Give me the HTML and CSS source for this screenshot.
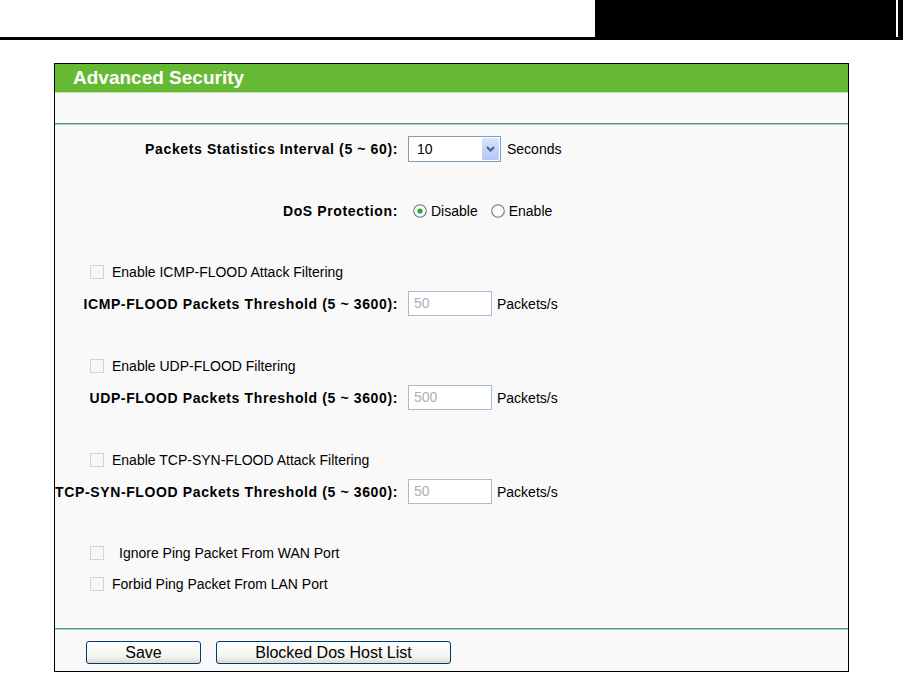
FILE: index.html
```html
<!DOCTYPE html>
<html>
<head>
<meta charset="utf-8">
<link rel="stylesheet" href="styles.css">
</head>
<body>
<div class="topbar">
  <div class="topbar-space"></div>
  <div class="topbar-block"></div>
  <div class="topbar-gap"></div>
  <div class="topbar-end"></div>
</div>
<div class="panel">
  <div class="panel-head">Advanced Security</div>
  <div class="panel-sub"></div>
  <div class="rule"></div>
  <div class="form">
    <div class="row row-interval">
      <div class="label">Packets Statistics Interval (5 ~ 60):</div>
      <div class="field">
        <div class="select"><span class="select-val">10</span><span class="select-btn"><svg width="9" height="6" viewBox="0 0 9 6"><polyline points="1,1 4.5,4.5 8,1" fill="none" stroke="#4d6185" stroke-width="2"/></svg></span></div>
        <span class="unit">Seconds</span>
      </div>
    </div>
    <div class="row row-dos">
      <div class="label">DoS Protection:</div>
      <div class="field radios">
        <span class="radio"><svg width="14" height="14" viewBox="0 0 14 14"><circle cx="7" cy="7" r="6.3" fill="#fbfbfb" stroke="#5d7a9c" stroke-width="1.1"/><circle cx="7" cy="7" r="2.6" fill="#2fa83a"/></svg></span><span class="rtext">Disable</span>
        <span class="radio"><svg width="14" height="14" viewBox="0 0 14 14"><circle cx="7" cy="7" r="6.3" fill="#fbfbfb" stroke="#5d7a9c" stroke-width="1.1"/></svg></span><span class="rtext">Enable</span>
      </div>
    </div>
    <div class="check check-first"><span class="box"></span><span class="ctext">Enable ICMP-FLOOD Attack Filtering</span></div>
    <div class="row row-thr">
      <div class="label">ICMP-FLOOD Packets Threshold (5 ~ 3600):</div>
      <div class="field"><div class="input">50</div><span class="unit2">Packets/s</span></div>
    </div>
    <div class="check check-next"><span class="box"></span><span class="ctext">Enable UDP-FLOOD Filtering</span></div>
    <div class="row row-thr">
      <div class="label">UDP-FLOOD Packets Threshold (5 ~ 3600):</div>
      <div class="field"><div class="input">500</div><span class="unit2">Packets/s</span></div>
    </div>
    <div class="check check-next"><span class="box"></span><span class="ctext">Enable TCP-SYN-FLOOD Attack Filtering</span></div>
    <div class="row row-thr">
      <div class="label">TCP-SYN-FLOOD Packets Threshold (5 ~ 3600):</div>
      <div class="field"><div class="input">50</div><span class="unit2">Packets/s</span></div>
    </div>
    <div class="check check-ping"><span class="box"></span><span class="ctext ctext-wide">Ignore Ping Packet From WAN Port</span></div>
    <div class="check check-last"><span class="box"></span><span class="ctext">Forbid Ping Packet From LAN Port</span></div>
  </div>
  <div class="rule rule-bottom"></div>
  <div class="buttons">
    <button class="btn btn-save">Save</button>
    <button class="btn btn-list">Blocked Dos Host List</button>
  </div>
</div>
</body>
</html>
```
FILE: styles.css
```css
html, body {
  margin: 0;
  padding: 0;
  background: #ffffff;
  font-family: "Liberation Sans", Arial, sans-serif;
  color: #000;
}

.topbar {
  display: flex;
  width: 903px;
  height: 37px;
  border-bottom: 3px solid #000;
}
.topbar-space { width: 595px; }
.topbar-block { width: 301px; background: #000; }
.topbar-gap { width: 2px; background: #fff; }
.topbar-end { width: 5px; background: #000; }

.panel {
  margin: 23px 0 0 54px;
  width: 793px;
  border: 1px solid #000;
  background: #f9f9f9;
  padding-bottom: 7px;
}

.panel-head {
  height: 28px;
  background: #66b933;
  color: #fff;
  font-weight: bold;
  font-size: 19px;
  line-height: 28px;
  padding-left: 18px;
}

.panel-sub {
  height: 30px;
  border-top: 1px solid #c9e6b5;
}

.rule {
  height: 1px;
  border-top: 1px solid #4c9a69;
  background: #a9d4b8;
}

.form {
  display: flex;
  flex-direction: column;
}

.row {
  display: grid;
  grid-template-columns: 343px 1fr;
  column-gap: 10px;
  align-items: center;
}

.label {
  text-align: right;
  font-weight: bold;
  font-size: 14px;
  letter-spacing: 0.62px;
  white-space: nowrap;
}

.field {
  display: flex;
  align-items: center;
}

.row-interval { margin-top: 11px; height: 26px; }
.row-dos { margin-top: 39px; height: 20px; }
.row-thr { margin-top: 9px; height: 25px; }

.select {
  border: 1px solid #7f9db9;
  background: #fff;
  display: flex;
  align-items: center;
  justify-content: space-between;
  box-sizing: border-box;
  width: 93px;
  height: 26px;
}
.select-val {
  font-size: 14px;
  padding-left: 8px;
}
.select-btn {
  width: 17px;
  height: 22px;
  margin-right: 1px;
  background: linear-gradient(#d6e3fd, #b2c7f4);
  border-radius: 2px;
  display: flex;
  align-items: center;
  justify-content: center;
}

.unit {
  font-size: 14px;
  margin-left: 6px;
}
.unit2 {
  font-size: 14px;
  margin-left: 5px;
}

.radios {
  padding-left: 5px;
  font-size: 14px;
}
.radio {
  display: flex;
  width: 14px;
  height: 14px;
}
.rtext { margin-left: 4px; margin-right: 13px; }

.check {
  display: flex;
  align-items: center;
  height: 20px;
  padding-left: 35px;
  font-size: 14px;
}
.check-first { margin-top: 41px; }
.check-next { margin-top: 40px; }
.check-ping { margin-top: 39px; }
.check-last { margin-top: 11px; }

.box {
  width: 12px;
  height: 12px;
  border: 1px solid #d4d3cc;
  background: #f7f7f4;
}
.ctext { margin-left: 8px; }
.ctext-wide { margin-left: 15px; }

.input {
  width: 84px;
  height: 25px;
  box-sizing: border-box;
  border: 1px solid #a5bcd3;
  background: #fff;
  color: #b0b0b0;
  font-size: 14px;
  line-height: 23px;
  padding-left: 5px;
}

.rule-bottom { margin-top: 34px; }

.buttons {
  display: flex;
  gap: 15px;
  padding-left: 31px;
  margin-top: 11px;
}

.btn {
  height: 23px;
  border: 1px solid #003c74;
  border-radius: 3px;
  background: linear-gradient(#ffffff, #f3f3ef 70%, #dcd8ce);
  font-family: "Liberation Sans", Arial, sans-serif;
  font-size: 16px;
  line-height: 21px;
  color: #000;
  padding: 0;
}
.btn-save { width: 115px; }
.btn-list { width: 235px; }
```
